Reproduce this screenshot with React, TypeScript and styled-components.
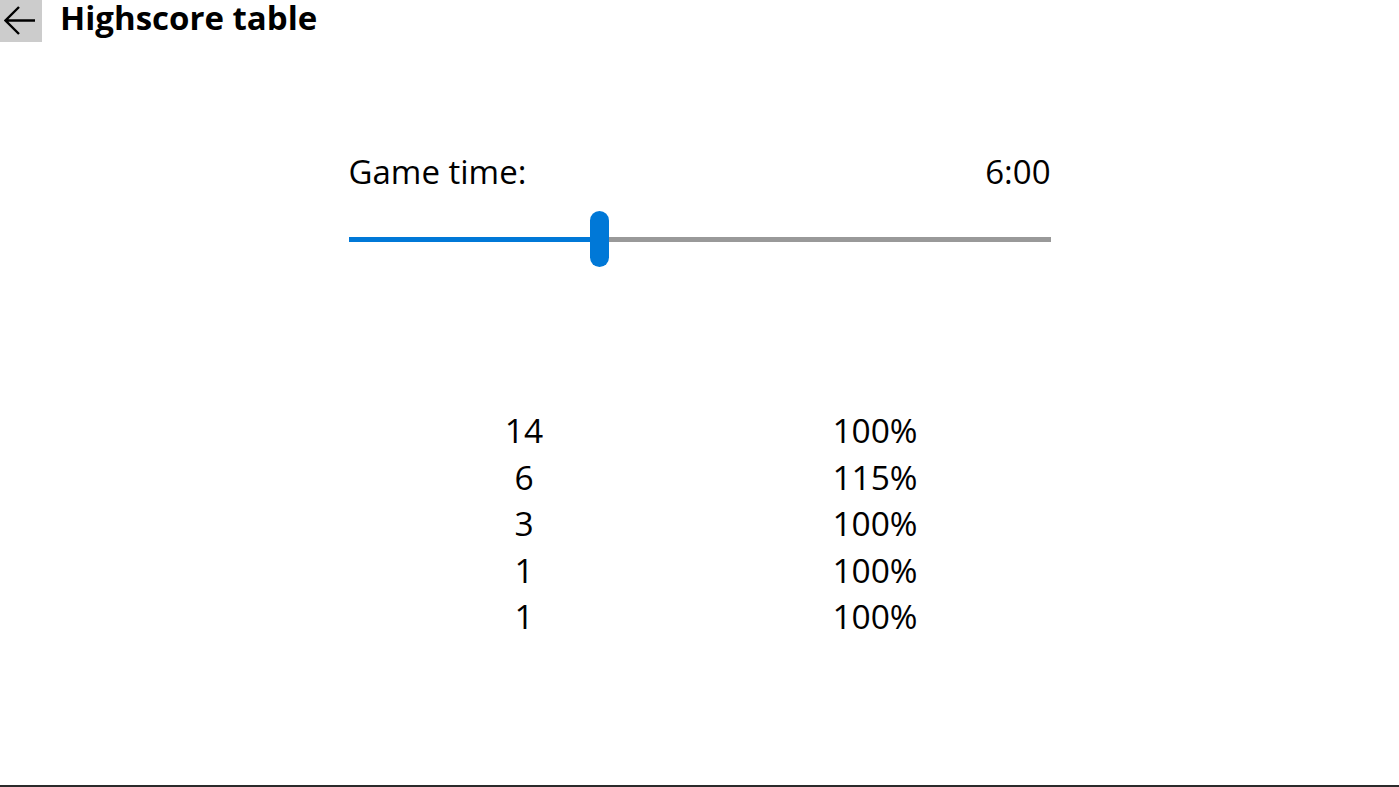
import styled, { createGlobalStyle } from "styled-components";

const rows = [
  { score: "14", speed: "100%" },
  { score: "6", speed: "115%" },
  { score: "3", speed: "100%" },
  { score: "1", speed: "100%" },
  { score: "1", speed: "100%" },
];

const progress = 0.357;

export default function App() {
  return (
    <Page>
      <GlobalStyle />
      <Header>
        <BackButton aria-label="Back">
          <svg width="31" height="29" viewBox="0 0 31 29" fill="none">
            <path
              d="M31 14.5H2M15 1L1.5 14.5L15 28"
              stroke="#000"
              strokeWidth="2.4"
            />
          </svg>
        </BackButton>
        <Title>Highscore table</Title>
      </Header>

      <Content>
        <TimeRow>
          <Label>Game time:</Label>
          <Label>6:00</Label>
        </TimeRow>

        <Slider>
          <Track>
            <Filled style={{ width: `${progress * 100}%` }} />
          </Track>
          <Thumb style={{ left: `${progress * 100}%` }} />
        </Slider>

        <Table>
          {rows.map((r, i) => (
            <Row key={i}>
              <Cell>{r.score}</Cell>
              <Cell>{r.speed}</Cell>
            </Row>
          ))}
        </Table>
      </Content>
    </Page>
  );
}

const GlobalStyle = createGlobalStyle`
  html, body {
    margin: 0;
    padding: 0;
    background: #fff;
  }
  body {
    font-family: "Open Sans", "Noto Sans", sans-serif;
    color: #000;
  }
`;

const Page = styled.div`
  height: 787px;
  box-sizing: border-box;
  border-bottom: 2px solid #2b2b2b;
  overflow: hidden;
`;

const Header = styled.div`
  display: flex;
  align-items: flex-start;
  height: 42px;
`;

const BackButton = styled.button`
  width: 42px;
  height: 42px;
  padding: 0 0 1px 4px;
  border: none;
  background: #cccccc;
  display: flex;
  align-items: center;
  justify-content: flex-start;
`;

const Title = styled.h1`
  margin: 0 0 0 18px;
  font-size: 33px;
  font-weight: 700;
  line-height: 36px;
`;

const Content = styled.div`
  width: 702px;
  margin: 0 auto;
  display: flex;
  flex-direction: column;
`;

const TimeRow = styled.div`
  display: flex;
  justify-content: space-between;
  margin-top: 109px;
`;

const Label = styled.span`
  font-size: 33px;
  line-height: 42px;
`;

const Slider = styled.div`
  position: relative;
  height: 56px;
  margin-top: 18px;
  display: flex;
  align-items: center;
`;

const Track = styled.div`
  width: 100%;
  height: 5px;
  background: #999999;
  display: flex;
`;

const Filled = styled.div`
  height: 100%;
  background: #0078d7;
`;

const Thumb = styled.div`
  position: absolute;
  top: 0;
  width: 19px;
  height: 56px;
  margin-left: -9px;
  border-radius: 10px;
  background: #0078d7;
`;

const Table = styled.div`
  margin-top: 140px;
  display: flex;
  flex-direction: column;
`;

const Row = styled.div`
  display: grid;
  grid-template-columns: 1fr 1fr;
  height: 46.5px;
`;

const Cell = styled.div`
  text-align: center;
  font-size: 33.5px;
  line-height: 46.5px;
`;
